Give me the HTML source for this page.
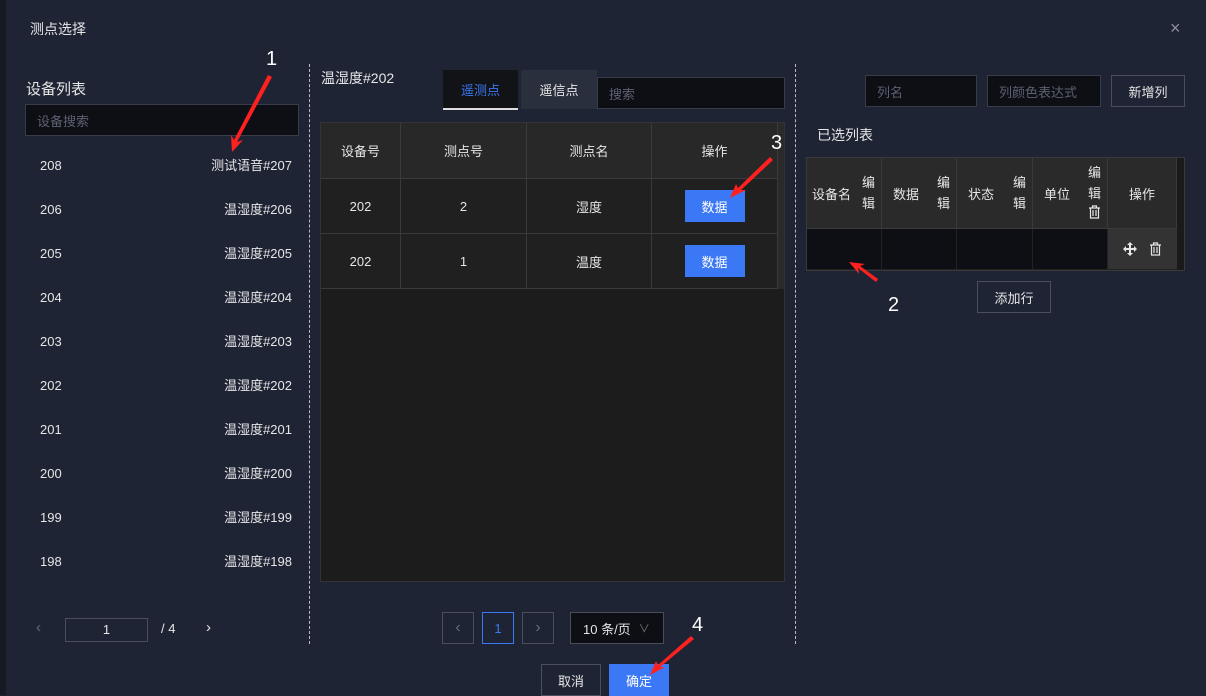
<!DOCTYPE html>
<html><head><meta charset="utf-8"><style>
*{margin:0;padding:0;box-sizing:border-box}
body{width:1206px;height:695px;background:#1f2434;position:relative;overflow:hidden;font-family:"Liberation Sans","Noto Sans CJK SC",sans-serif;color:#e6e6e6;font-size:13px}
.a{position:absolute}
.t{white-space:nowrap}
.inp{position:absolute;background:#0d0f15;border:1px solid #383c48;color:#5c6070;padding-left:11px;display:flex;align-items:center;font-size:13px}
.btn{position:absolute;border:1px solid #4a4e5a;display:flex;align-items:center;justify-content:center;font-size:13px;color:#e6e6e6}
.blue{background:#3b78f5;border:none;color:#fff}
.row{position:absolute;left:40px;width:252px;height:18px;line-height:18px;display:flex;justify-content:space-between;align-items:center;font-size:13px}
.row span{display:block;height:18px;line-height:18px}
.cell{position:absolute;display:flex;align-items:center;justify-content:center;border-right:1px solid #3a3a3a;border-bottom:1px solid #3a3a3a}
</style></head><body>
<div class="a" style="left:0;top:0;width:6px;height:695px;background:#161a22"></div>
<div class="a t" style="left:30px;top:19px;font-size:14px">测点选择</div>
<div class="a t" style="left:1170px;top:18px;font-size:18px;color:#8a8e99">×</div>

<div class="a t" style="left:26px;top:78px;font-size:15px">设备列表</div>
<div class="inp" style="left:25px;top:104px;width:274px;height:32px">设备搜索</div>
<div class="row" style="top:157px"><span>208</span><span>测试语音#207</span></div>
<div class="row" style="top:201px"><span>206</span><span>温湿度#206</span></div>
<div class="row" style="top:245px"><span>205</span><span>温湿度#205</span></div>
<div class="row" style="top:289px"><span>204</span><span>温湿度#204</span></div>
<div class="row" style="top:333px"><span>203</span><span>温湿度#203</span></div>
<div class="row" style="top:377px"><span>202</span><span>温湿度#202</span></div>
<div class="row" style="top:421px"><span>201</span><span>温湿度#201</span></div>
<div class="row" style="top:465px"><span>200</span><span>温湿度#200</span></div>
<div class="row" style="top:509px"><span>199</span><span>温湿度#199</span></div>
<div class="row" style="top:553px"><span>198</span><span>温湿度#198</span></div>
<div class="a t" style="left:36px;top:619px;color:#666b78;font-size:15px">‹</div>
<div class="a" style="left:65px;top:618px;width:83px;height:24px;border:1px solid #4a4e5a;text-align:center;line-height:22px">1</div>
<div class="a t" style="left:161px;top:621px">/ 4</div>
<div class="a t" style="left:206px;top:619px;font-size:15px">›</div>

<div class="a" style="left:309px;top:64px;height:580px;border-left:1px dashed #bbb"></div>
<div class="a" style="left:795px;top:64px;height:580px;border-left:1px dashed #bbb"></div>

<div class="a t" style="left:321px;top:68px;font-size:14px">温湿度#202</div>
<div class="a" style="left:443px;top:70px;width:75px;height:40px;background:#111316;border-bottom:2px solid #ddd;color:#3b78f5;display:flex;align-items:center;justify-content:center">遥测点</div>
<div class="a" style="left:521px;top:70px;width:76px;height:39px;background:#2a2f3d;display:flex;align-items:center;justify-content:center">遥信点</div>
<div class="inp" style="left:597px;top:77px;width:188px;height:32px">搜索</div>

<div class="a" style="left:320px;top:122px;width:465px;height:460px;background:#1c1c1c;border:1px solid #333"></div>
<div class="a" style="left:777px;top:123px;width:7px;height:166px;background:#2a2a2a"></div>
<div class="cell" style="left:321px;top:123px;width:80px;height:56px;background:#282828">设备号</div>
<div class="cell" style="left:401px;top:123px;width:126px;height:56px;background:#282828">测点号</div>
<div class="cell" style="left:527px;top:123px;width:125px;height:56px;background:#282828">测点名</div>
<div class="cell" style="left:652px;top:123px;width:126px;height:56px;background:#282828">操作</div>
<div class="cell" style="left:321px;top:179px;width:80px;height:55px;background:#202020">202</div>
<div class="cell" style="left:401px;top:179px;width:126px;height:55px;background:#202020">2</div>
<div class="cell" style="left:527px;top:179px;width:125px;height:55px;background:#202020">湿度</div>
<div class="cell" style="left:652px;top:179px;width:126px;height:55px;background:#202020"><div class="btn blue" style="position:static;width:60px;height:32px">数据</div></div>
<div class="cell" style="left:321px;top:234px;width:80px;height:55px;background:#202020">202</div>
<div class="cell" style="left:401px;top:234px;width:126px;height:55px;background:#202020">1</div>
<div class="cell" style="left:527px;top:234px;width:125px;height:55px;background:#202020">温度</div>
<div class="cell" style="left:652px;top:234px;width:126px;height:55px;background:#202020"><div class="btn blue" style="position:static;width:60px;height:32px">数据</div></div>

<div class="btn" style="left:442px;top:612px;width:32px;height:32px;color:#666b78;font-size:16px">‹</div>
<div class="btn" style="left:482px;top:612px;width:32px;height:32px;border-color:#3b78f5;color:#3b78f5">1</div>
<div class="btn" style="left:522px;top:612px;width:32px;height:32px;color:#666b78;font-size:16px">›</div>
<div class="btn" style="left:570px;top:612px;width:94px;height:32px;background:#0d0f15;justify-content:flex-start;padding-left:12px">10 条/页 <span style="color:#777;margin-left:8px;font-size:11px">∨</span></div>

<div class="btn" style="left:541px;top:664px;width:60px;height:32px">取消</div>
<div class="btn blue" style="left:609px;top:664px;width:60px;height:32px">确定</div>

<div class="inp" style="left:865px;top:75px;width:112px;height:32px">列名</div>
<div class="inp" style="left:987px;top:75px;width:114px;height:32px">列颜色表达式</div>
<div class="btn" style="left:1111px;top:75px;width:74px;height:32px">新增列</div>
<div class="a t" style="left:817px;top:125px;font-size:14px">已选列表</div>

<div class="a" style="left:806px;top:157px;width:379px;height:114px;border:1px solid #3a3a3a;background:#222"></div>
<div class="a" style="left:1177px;top:158px;width:7px;height:112px;background:#1a1a1a"></div>
<div class="cell" style="left:807px;top:158px;width:75px;height:71px;background:#2a2a2a;justify-content:space-between;padding:0 6px 0 5px"><span>设备名</span><span style="width:13px;line-height:21px">编辑</span></div>
<div class="cell" style="left:882px;top:158px;width:75px;height:71px;background:#2a2a2a;justify-content:space-between;padding:0 6px 0 11px"><span>数据</span><span style="width:13px;line-height:21px">编辑</span></div>
<div class="cell" style="left:957px;top:158px;width:76px;height:71px;background:#2a2a2a;justify-content:space-between;padding:0 6px 0 11px"><span>状态</span><span style="width:13px;line-height:21px">编辑</span></div>
<div class="cell" style="left:1033px;top:158px;width:75px;height:71px;background:#2a2a2a;justify-content:space-between;padding:0 6px 0 11px"><span>单位</span><span style="width:13px;line-height:21px">编辑<br><svg width="13" height="14" viewBox="0 0 13 14" fill="none" stroke="#e6e6e6" stroke-width="1.2"><path d="M1 3h11M4.5 3V1h4v2M2.5 3v10h8V3M5 5v6M8 5v6"/></svg></span></div>
<div class="cell" style="left:1108px;top:158px;width:69px;height:71px;background:#2a2a2a">操作</div>
<div class="a" style="left:807px;top:229px;width:74px;height:40px;background:#0d0f15"></div>
<div class="a" style="left:882px;top:229px;width:74px;height:40px;background:#0d0f15"></div>
<div class="a" style="left:957px;top:229px;width:75px;height:40px;background:#0d0f15"></div>
<div class="a" style="left:1033px;top:229px;width:74px;height:40px;background:#0d0f15"></div>
<div class="a" style="left:1108px;top:229px;width:69px;height:40px;background:#333;display:flex;align-items:center;justify-content:center;gap:12px">
<svg width="14" height="14" viewBox="0 0 14 14" fill="#e6e6e6"><path d="M7 0L10 3H8V6H11V4L14 7L11 10V8H8V11H10L7 14L4 11H6V8H3V10L0 7L3 4V6H6V3H4Z"/></svg>
<svg width="13" height="14" viewBox="0 0 13 14" fill="none" stroke="#e6e6e6" stroke-width="1.2"><path d="M1 3h11M4.5 3V1h4v2M2.5 3v10h8V3M5 5v6M8 5v6"/></svg></div>
<div class="btn" style="left:977px;top:281px;width:74px;height:32px">添加行</div>

<svg class="a" style="left:0;top:0" width="1206" height="695">
<g fill="#ff2020">
<polygon points="268,75 272,77 237,142 243,140 232,152 231,135 234,140"/>
<polygon points="878,279 876,282 858,268 859,274 849,262 865,264 860,266"/>
<polygon points="770,157 773,160 741,190 746,190 730,198 736,184 738,188"/>
<polygon points="691,636 694,639 660,667 665,667 650,675 656,661 658,665"/>
</g>
<g fill="#fff" font-family="Liberation Sans,sans-serif" font-size="20">
<text x="266" y="65">1</text><text x="888" y="311">2</text><text x="771" y="149">3</text><text x="692" y="631">4</text>
</g>
</svg>
</body></html>
